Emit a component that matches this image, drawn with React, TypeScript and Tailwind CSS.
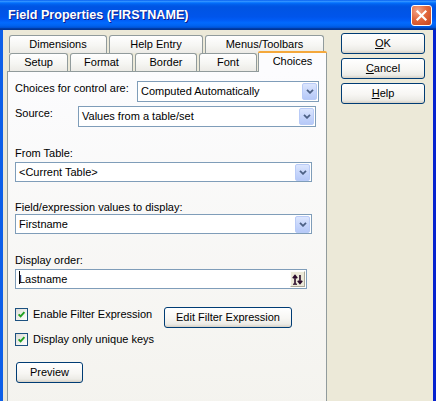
import React from "react";

function XPButton({ children, className }: { children: React.ReactNode; className: string }) {
  return (
    <div
      className={`flex items-center justify-center rounded-[3px] border border-[#003c74] bg-[linear-gradient(180deg,#ffffff_0%,#f7f6f3_55%,#ecebe6_85%,#d6d0c5_100%)] text-[11px] text-black ${className}`}
    >
      {children}
    </div>
  );
}

function DropArrow() {
  return (
    <div className="ml-auto mr-px flex h-[17px] w-[15px] shrink-0 items-center justify-center rounded-[2px] border border-[#b9cbf7] bg-[linear-gradient(180deg,#dce6fe_0%,#c7d6fb_50%,#b6c9f8_100%)]">
      <svg width="8" height="5" viewBox="0 0 8 5">
        <path d="M1 0.8 L4 3.8 L7 0.8" stroke="#4d6185" strokeWidth="1.8" fill="none" />
      </svg>
    </div>
  );
}

function Select({ value, className }: { value: string; className: string }) {
  return (
    <div className={`flex items-center border border-[#7f9db9] bg-white pl-[3px] text-[11px] text-black ${className}`}>
      <span className="whitespace-nowrap">{value}</span>
      <DropArrow />
    </div>
  );
}

function Checkbox() {
  return (
    <div className="flex h-[13px] w-[13px] shrink-0 items-center justify-center border border-[#1c5180] bg-[linear-gradient(135deg,#dcdcd7_0%,#f5f5f2_70%,#ffffff_100%)]">
      <svg width="9" height="9" viewBox="0 0 9 9">
        <path d="M1.6 4.3 L3.6 6.4 L7.4 2.2" stroke="#21a121" strokeWidth="1.9" fill="none" />
      </svg>
    </div>
  );
}

function Tab({ label, className }: { label: string; className: string }) {
  return (
    <div
      className={`flex h-[18px] shrink-0 items-center justify-center rounded-t-[3px] border border-b-0 border-[#919b9c] bg-[linear-gradient(180deg,#ffffff_0%,#f6f6f3_55%,#ecebe6_100%)] text-[11px] text-black ${className}`}
    >
      {label}
    </div>
  );
}

export default function App() {
  return (
    <div className="h-[401px] w-[436px] overflow-hidden bg-[#0831d9] font-['Liberation_Sans',Arial,sans-serif]">
      {/* Title bar */}
      <div className="flex h-[30px] items-center bg-[linear-gradient(180deg,#0058ee_0%,#3593ff_4%,#288eff_6%,#127dff_8%,#036ffc_10%,#0262ee_14%,#0057e5_20%,#0054e3_24%,#0055eb_56%,#005bf5_66%,#026afe_76%,#0062ef_86%,#0052d6_92%,#0040ab_94%,#003092_100%)] pl-[8px] pr-[4px]">
        <span className="text-[12.6px] font-bold text-white [text-shadow:1px_1px_#0f1a8a]">
          Field Properties (FIRSTNAME)
        </span>
        <div className="ml-auto flex h-[21px] w-[21px] items-center justify-center rounded-[3px] border border-white bg-[radial-gradient(circle_at_30%_25%,#f3a68c_0%,#e3693f_45%,#c6431c_100%)]">
          <svg width="13" height="13" viewBox="0 0 13 13">
            <path d="M2.5 2.5 L10.5 10.5 M10.5 2.5 L2.5 10.5" stroke="white" strokeWidth="2.2" strokeLinecap="square" />
          </svg>
        </div>
      </div>

      {/* Body */}
      <div className="flex h-[371px]">
        <div className="w-[3px] shrink-0 bg-[#0d5fe8]" />
        <div className="flex flex-1 items-start bg-[#ece9d8] pl-[4px] pt-[3px]">
          {/* Tab control */}
          <div className="mt-[2px] flex w-[320px] shrink-0 flex-col">
            <div className="flex h-[18px] gap-[2px] pl-[2px]">
              <Tab label="Dimensions" className="w-[98px]" />
              <Tab label="Help Entry" className="w-[94px]" />
              <Tab label="Menus/Toolbars" className="w-[119px]" />
            </div>
            <div className="flex h-[18px] items-start gap-[2px] pl-[2px]">
              <Tab label="Setup" className="w-[59px] border-t" />
              <Tab label="Format" className="w-[63px]" />
              <Tab label="Border" className="w-[62px]" />
              <Tab label="Font" className="w-[58px]" />
              <div className="relative z-10 -ml-px -mt-[2px] flex h-[21px] w-[69px] shrink-0 flex-col">
                <div className="h-[2px] rounded-t-[3px] bg-[#f4a83c]" />
                <div className="flex flex-1 items-center justify-center border-x border-[#919b9c] bg-[#fcfcfe] pb-[2px] text-[11px] text-black">
                  Choices
                </div>
              </div>
            </div>

            {/* Panel */}
            <div className="flex h-[340px] flex-col border border-[#919b9c] bg-[linear-gradient(180deg,#fcfcfe_0%,#f4f3ee_100%)] pl-[7px] text-[11px] text-black">
              <div className="mt-[9px] flex items-start">
                <span className="mt-[1px] w-[122px] shrink-0 leading-[13px]">Choices for control are:</span>
                <Select value="Computed Automatically" className="h-[21px] w-[182px]" />
              </div>
              <div className="mt-[4px] flex items-start">
                <span className="mt-[1px] w-[63px] shrink-0 leading-[13px]">Source:</span>
                <Select value="Values from a table/set" className="h-[21px] w-[238px]" />
              </div>

              <span className="mt-[20px] leading-[13px]">From Table:</span>
              <Select value="<Current Table>" className="mt-[2px] h-[20px] w-[297px]" />

              <span className="mt-[19px] leading-[13px]">Field/expression values to display:</span>
              <Select value="Firstname" className="mt-0 h-[20px] w-[297px]" />

              <span className="mt-[20px] leading-[13px]">Display order:</span>
              <div className="mt-[2px] flex h-[20px] w-[292px] items-center border border-[#7f9db9] bg-white pl-[3px]">
                <span className="relative whitespace-nowrap">
                  <span className="absolute left-0 top-0 h-[13px] w-px bg-black" />
                  Lastname
                </span>
                <div className="ml-auto mr-px flex h-[16px] w-[15px] items-center justify-center border border-[#fdfdfb] border-b-[#aca899] border-r-[#aca899] bg-[#ece9d8]">
                  <svg width="11" height="11" viewBox="0 0 11 11">
                    <path d="M3 10 L3 2 M0.8 4.2 L3 1.5 L5.2 4.2" stroke="#2a0a2a" strokeWidth="1.6" fill="none" />
                    <path d="M8 1 L8 9 M5.8 6.8 L8 9.5 L10.2 6.8" stroke="#2a0a2a" strokeWidth="1.6" fill="none" />
                    <path d="M1 10.2 L5 10.2" stroke="#2a0a2a" strokeWidth="1.2" />
                  </svg>
                </div>
              </div>

              <div className="mt-[18px] flex items-start">
                <div className="flex w-[149px] shrink-0 flex-col">
                  <div className="mt-[1px] flex h-[13px] items-center gap-[5px]">
                    <Checkbox />
                    <span className="whitespace-nowrap">Enable Filter Expression</span>
                  </div>
                  <div className="mt-[12px] flex h-[13px] items-center gap-[5px]">
                    <Checkbox />
                    <span className="whitespace-nowrap">Display only unique keys</span>
                  </div>
                </div>
                <XPButton className="h-[21px] w-[128px]">Edit Filter Expression</XPButton>
              </div>

              <XPButton className="ml-px mt-[16px] h-[21px] w-[67px]">Preview</XPButton>
            </div>
          </div>

          {/* Dialog buttons */}
          <div className="ml-[14px] flex w-[84px] shrink-0 flex-col gap-[4px]">
            <XPButton className="h-[21px] w-[84px]">
              <span className="underline">O</span>K
            </XPButton>
            <XPButton className="h-[21px] w-[84px]">
              <span className="underline">C</span>ancel
            </XPButton>
            <XPButton className="h-[21px] w-[84px]">
              <span className="underline">H</span>elp
            </XPButton>
          </div>
        </div>
        <div className="w-[3px] shrink-0 bg-[#0522cf]" />
      </div>
    </div>
  );
}
